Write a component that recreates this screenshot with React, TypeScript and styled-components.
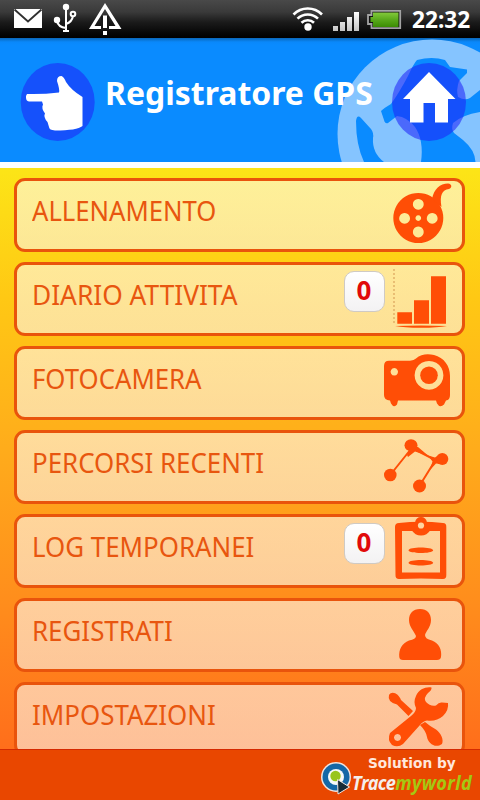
import React from "react";
import styled, { createGlobalStyle } from "styled-components";

const GlobalStyle = createGlobalStyle`
  * { box-sizing: border-box; }
  body { margin: 0; background: #000; overflow: hidden; }
`;

const Screen = styled.div`
  width: 480px;
  height: 800px;
  display: flex;
  flex-direction: column;
  overflow: hidden;
  font-family: "Noto Sans", "Open Sans", sans-serif;
`;

const StatusBar = styled.div`
  flex: none;
  height: 38px;
  padding: 0 7px 0 12px;
  display: flex;
  justify-content: space-between;
  background: linear-gradient(#494949 0, #3a3a3a 12px, #1b1b1b 22px, #050505 34px, #000 38px);
`;

const StatusGroup = styled.div`
  display: flex;
  height: 38px;
`;

const Clock = styled.div`
  width: 61px;
  color: #fff;
  font-size: 23px;
  font-weight: 700;
  line-height: 39px;
  white-space: nowrap;
  transform-origin: 0 50%;
  transform: scaleX(0.985);
`;

const Header = styled.header`
  flex: none;
  height: 130px;
  display: grid;
  grid-template-columns: 105px 225px 150px;
  background: linear-gradient(#0a66b8 0, #0a88fa 4px, #0a8bff 7px);
  border-bottom: 6px solid #fff;
`;

const Title = styled.h1`
  margin: 0;
  padding-top: 33px;
  color: #fff;
  font-size: 32px;
  line-height: 44px;
  font-weight: 700;
  white-space: nowrap;
  z-index: 1;
  width: max-content;
  transform-origin: 0 50%;
  transform: scaleX(0.998);
`;

const List = styled.main`
  flex: none;
  height: 582px;
  padding: 10px 15px 0 14px;
  display: flex;
  flex-direction: column;
  gap: 10px;
  overflow: hidden;
  background: linear-gradient(#fce517 0, #ffc814 130px, #ffac1b 280px, #ff8c1c 440px, #ff6e1b 582px);
`;

const Row = styled.div`
  flex: none;
  height: 74px;
  display: flex;
  align-items: flex-start;
  border: 3px solid #e9540c;
  border-radius: 11px;
  background: linear-gradient(rgba(255, 250, 240, 0.6), rgba(252, 244, 232, 0.61));
`;

const Label = styled.div<{ $scale: number }>`
  flex: 1;
  padding: 10px 0 0 15px;
  color: #e8560f;
  font-size: 28px;
  line-height: 38px;
  white-space: nowrap;
  transform-origin: 15px 50%;
  transform: scaleX(${(p) => p.$scale});
`;

const Count = styled.div`
  flex: none;
  width: 41px;
  height: 41px;
  margin: 6px -3px 0 0;
  padding-right: 1px;
  border: 1px solid #cfcac4;
  border-radius: 10px;
  background: linear-gradient(#fff, #f3f2f3);
  color: #e10a0a;
  font-size: 26px;
  font-weight: 700;
  line-height: 37px;
  text-align: center;
`;

const Icon = styled.svg`
  flex: none;
  width: 76px;
  height: 68px;
  margin-right: 4px;
  overflow: visible;
  fill: #ff4e06;
  stroke: none;
`;

const Footer = styled.footer`
  flex: none;
  height: 50px;
  display: flex;
  justify-content: flex-end;
  padding-right: 6px;
  background: #e94700;
  box-shadow: 0 -1px 0 #d52a00;
  z-index: 1;
`;

const Brand = styled.div`
  display: flex;
  flex-direction: column;
  width: 122px;
  padding-top: 5px;
`;

const Solution = styled.div`
  padding-left: 16px;
  font: 700 14.5px/17px "DejaVu Sans", sans-serif;
  color: #ffe7dc;
  white-space: nowrap;
  transform-origin: 16px 50%;
  transform: scaleX(0.945);
`;

const BrandName = styled.div`
  font: italic 700 20px/22px "Open Sans", sans-serif;
  letter-spacing: -0.8px;
  color: #f4efec;
  white-space: nowrap;
  transform-origin: 0 50%;
  transform: scaleX(0.905);
`;

const Green = styled.span`
  color: #a5c812;
  letter-spacing: 0.4px;
`;

const Reel = () => (
  <Icon viewBox="0 0 76 68">
    <path fillRule="evenodd" d="M36.3 12a25 25 0 1 0 .01 0zM36.3 17.9a5.4 5.4 0 1 1-.01 0zM36.3 45.6a5.4 5.4 0 1 1-.01 0zM22.6 32a5.4 5.4 0 1 1-.01 0zM50.2 32a5.4 5.4 0 1 1-.01 0zM36.3 34.3a2.8 2.8 0 1 1-.01 0z" />
    <path d="M50 18C52 8 58 2.500 66 2.500C70.500 3 70 7 67 8C60 9 57.500 14 59.500 26z" />
  </Icon>
);

const Bars = () => (
  <Icon viewBox="0 0 76 68">
    <path d="M12 4V60" stroke="#dba35c" strokeWidth="1.2" strokeDasharray="2 2" />
    <path d="M15.300 47.200H30V58.700H15.300zM32 35.300H47V58.700H32zM49 11.200H64V58.700H49z" />
    <path d="M13 61Q39 60.200 65 61Q56 62.800 39 62.800T13 61z" />
  </Icon>
);

const Projector = () => (
  <Icon viewBox="0 0 76 68">
    <path fillRule="evenodd" d="M2 17Q2 11.700 7 11.700H28Q32 11.500 34 9.500C39 4.800 46 4.500 52 6C62 8.500 68 17 68 27V46Q68 51 64 51.500L62 55.500Q58 59.500 55 54.500L54 51.500H16L15 55.500Q12 59.500 9 54.500L8 51.500Q2 51 2 46zM47 11.900a14.400 14.400 0 1 0 .01 0zM12.300 19.100a3.700 3.700 0 1 0 .01 0z" />
    <circle cx="47" cy="26.300" r="8.800" />
  </Icon>
);

const Route = () => (
  <Icon viewBox="0 0 76 68">
    <path d="M29 16L9 41M30 15L54 27.500H60M53.500 27L38 52" fill="none" stroke="#ff4e06" strokeWidth="2" />
    <path d="M25 22L29 13L36 14L46 22.500L33 18.500L26 24zM46 22.500L53 24.500L58 21V31L54 30.500L48 37L50.500 28.500z" />
    <ellipse cx="29" cy="12.300" rx="6.500" ry="6" />
    <circle cx="60.300" cy="26" r="6" />
    <circle cx="8.300" cy="42" r="6.300" />
    <circle cx="37.500" cy="53" r="6.500" />
  </Icon>
);

const Clipboard = () => (
  <Icon viewBox="0 0 76 68">
    <path fillRule="evenodd" d="M17 6Q39 3.500 61 6Q64.500 6 64.300 10V58Q64.500 62 61 62Q39 61 17 62Q13.300 62 13.500 58L13 10Q13 6 17 6zM20 14V55.500H58V14z" />
    <path d="M29.500 7L33 5.500Q34 0 39 0T45 5.500L48.500 7V13Q45 18.500 39 18.500T29.500 13z" />
    <circle cx="39" cy="8.500" r="3.100" fill="#ffd5a2" />
    <path d="M26.500 33.300C27 29.500 50.500 29.500 51.200 33.300C50.500 37 27 37 26.500 33.300zM26.500 45.700C27 42 50.500 42 51.200 45.700C50.500 49.300 27 49.300 26.500 45.700z" />
  </Icon>
);

const Person = () => (
  <Icon viewBox="0 0 76 68">
    <path d="M38 8C45 8 49 12.500 49 19C49 26 44 30 43 34Q43 38 50 39.500C57 42 60 49 59 56Q58.500 59 55 59H21Q17.500 59 17.300 56C16.500 49 20 42 27 39.500Q34 38 34 35C32 30 27 26 27 19C27 12.500 31 8 38 8z" />
  </Icon>
);

const Tools = () => (
  <Icon viewBox="0 0 76 68">
    <path fillRule="evenodd" d="M8 48L29 31Q34 27 34 23Q31 17 34 11C37 4 44 1.500 49.500 2.500Q50 5 46 8Q41 13 44 17Q48 21.500 54 20.500Q57 17 60 17.500L66 18Q67 25 61 31Q54 37 45 35.500Q41 36 38 40L21 59Q16 63 10 60Q5 55 8 48zM15.500 48.900a3.500 3.500 0 1 0 .01 0z" />
    <path d="M7 10C10 5 17 9 19 15L31 26L26.500 31L15 19.500Q5 17 7 10zM38 40L43 37Q49 42 54 44.500C59 48 62 55 60 59C53 64 46 58 45 52Q44 46 38 40z" />
  </Icon>
);

const items = [
  { label: "ALLENAMENTO", scale: 0.917, icon: <Reel /> },
  { label: "DIARIO ATTIVITA", scale: 0.939, count: 0, icon: <Bars /> },
  { label: "FOTOCAMERA", scale: 0.92, icon: <Projector /> },
  { label: "PERCORSI RECENTI", scale: 0.924, icon: <Route /> },
  { label: "LOG TEMPORANEI", scale: 0.924, count: 0, icon: <Clipboard /> },
  { label: "REGISTRATI", scale: 0.925, icon: <Person /> },
  { label: "IMPOSTAZIONI", scale: 0.925, icon: <Tools /> },
];

const StatusIcons = () => (
  <svg width="116" height="38" viewBox="12 0 116 38" fill="#fff">
    <path d="M14 9H42V28H14z" />
    <path d="M14.500 9.500L28 21.500L41.500 9.500" fill="none" stroke="#303030" strokeWidth="1.800" />
    <g fill="none" stroke="#fff" strokeWidth="2">
      <path d="M66 8V31M66 28Q58 27 57 21M66 24Q72 22 73 16" />
      <circle cx="73" cy="14" r="2.300" />
    </g>
    <circle cx="66" cy="7" r="3.200" />
    <circle cx="57" cy="20" r="3.200" />
    <path d="M63 30h6v2h-6z" />
    <path fillRule="evenodd" d="M105 3L121.500 29H89zM105 9L94.500 26H115.500z" />
    <path d="M101 16h8v14h-8z" fill="#181818" />
    <path d="M103 15.500h4V28h-4zM103 31h4v4h-4z" />
  </svg>
);

const SignalIcons = () => (
  <svg width="122" height="38" viewBox="290 0 122 38">
    <defs>
      <linearGradient id="battery" x2="0" y2="1">
        <stop stopColor="#83c93b" />
        <stop offset=".5" stopColor="#59a91b" />
        <stop offset="1" stopColor="#3b8c03" />
      </linearGradient>
      <linearGradient id="signal" x2="0" y2="1">
        <stop stopColor="#fff" />
        <stop offset="1" stopColor="#c4c4c4" />
      </linearGradient>
    </defs>
    <path d="M293.500 14.500A20 20 0 0 1 322 14.500M297.500 18.700A14.500 14.500 0 0 1 318 18.700M301.500 22.700A9 9 0 0 1 314 22.700" fill="none" stroke="#fff" strokeWidth="2.600" />
    <circle cx="308" cy="27" r="3.700" fill="#fff" />
    <path fill="url(#signal)" d="M333 26h5v5h-5zM340 22h5v9h-5zM347 17h5v14h-5zM354 12h5v19h-5z" />
    <path d="M371.500 10.800H400.200V28.200H371.500V24H368V15H371.500z" fill="#111" stroke="#a3a3a3" strokeWidth="1.800" />
    <path d="M373 12.500H398.500V27H373V22H370.500V17H373z" fill="url(#battery)" />
  </svg>
);

const Hand = () => (
  <svg width="105" height="124" viewBox="0 38 105 124">
    <ellipse cx="57.700" cy="102" rx="37" ry="39" fill="#1551fb" />
    <path fill="#fff" d="M27 94Q43 94.500 59 92.500Q60 90 57 81Q57 76 61.500 76Q64 77 66 82Q71 90 82.500 97V126Q77 130.500 55 130.500Q49 130 49 127L47.500 122Q43 117 45 113.500Q41 108 43 104.500L42 101.500H29Q25.500 101 26 96z" />
  </svg>
);

const GlobeHome = () => (
  <svg width="150" height="124" viewBox="330 38 150 124">
    <circle cx="432" cy="134" r="94.500" fill="#85c4ff" />
    <g fill="#0a8bff">
      <path d="M356 121Q357 114 361 118L371 129Q374 133 373 138Q372 153 384 162H364Q356 145 356 121z" />
      <path d="M417 60Q432 56 445 60L450 67L467 69.500V73L459 81Q456 90 458 97Q465 101 470 98L480 90V112Q462 115 453 123Q451 129 454 133L463 140Q475 150 475.500 162H421Q424 140 415 127Q407 117 397 116L388 123Q385 124 384 120L381 111Q384 108 391 104Q399 93 408 76Q414 63 417 60z" />
    </g>
    <ellipse cx="429" cy="102" rx="37" ry="39" fill="#1e22f8" fillOpacity=".56" />
    <path d="M429 72L455.500 99H448V122.500H435V103H423.500V122.500H410V99H403z" fill="#fff" />
  </svg>
);

const LogoMark = () => (
  <svg width="32" height="50" viewBox="320 750 32 50">
    <circle cx="336" cy="777" r="15" fill="#f0e4df" />
    <circle cx="336" cy="777" r="13.500" fill="#1468a7" />
    <circle cx="336" cy="777" r="8" fill="#f7fafa" />
    <circle cx="335.500" cy="776" r="5.200" fill="#98c51d" />
    <path d="M337.500 779.500L349.500 787L338 794z" fill="#152a36" stroke="#f0e4df" strokeWidth="1" />
  </svg>
);

export default function App() {
  return (
    <Screen>
      <GlobalStyle />
      <StatusBar>
        <StatusGroup>
          <StatusIcons />
        </StatusGroup>
        <StatusGroup>
          <SignalIcons />
          <Clock>22:32</Clock>
        </StatusGroup>
      </StatusBar>
      <Header>
        <Hand />
        <Title>Registratore GPS</Title>
        <GlobeHome />
      </Header>
      <List>
        {items.map((item) => (
          <Row key={item.label}>
            <Label $scale={item.scale}>{item.label}</Label>
            {item.count !== undefined && <Count>{item.count}</Count>}
            {item.icon}
          </Row>
        ))}
      </List>
      <Footer>
        <LogoMark />
        <Brand>
          <Solution>Solution by</Solution>
          <BrandName>
            Trace<Green>myworld</Green>
          </BrandName>
        </Brand>
      </Footer>
    </Screen>
  );
}
